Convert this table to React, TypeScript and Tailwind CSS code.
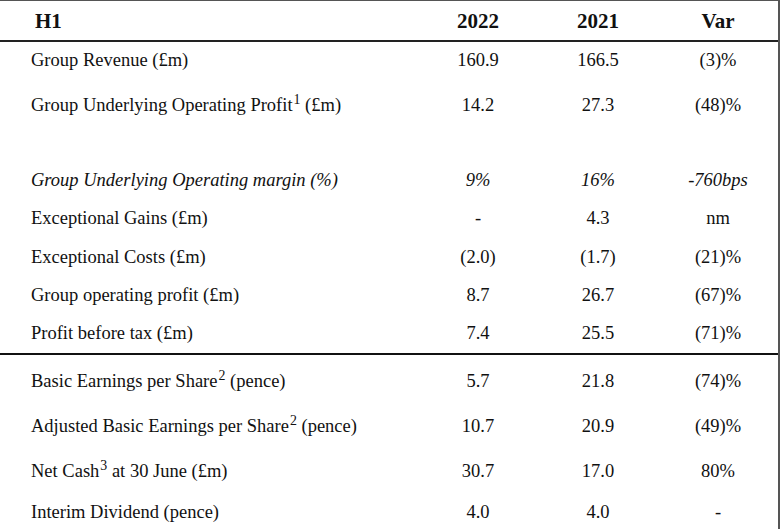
const rows = [
  { label: 'Group Revenue (£m)', a: '160.9', b: '166.5', v: '(3)%', h: 'h-[36px]' },
  { label: 'Group Underlying Operating Profit', sup: '1', after: ' (£m)', a: '14.2', b: '27.3', v: '(48)%', h: 'h-[54px]' },
  { spacer: true, h: 'h-[29px]' },
  { label: 'Group Underlying Operating margin (%)', a: '9%', b: '16%', v: '-760bps', h: 'h-[38px]', italic: true },
  { label: 'Exceptional Gains (£m)', a: '-', b: '4.3', v: 'nm', h: 'h-[38px]' },
  { label: 'Exceptional Costs (£m)', a: '(2.0)', b: '(1.7)', v: '(21)%', h: 'h-[40px]' },
  { label: 'Group operating profit (£m)', a: '8.7', b: '26.7', v: '(67)%', h: 'h-[36px]' },
  { label: 'Profit before tax (£m)', a: '7.4', b: '25.5', v: '(71)%', h: 'h-[42px]', rule: true },
  { label: 'Basic Earnings per Share', sup: '2', after: ' (pence)', a: '5.7', b: '21.8', v: '(74)%', h: 'h-[52px]' },
  { label: 'Adjusted Basic Earnings per Share', sup: '2', after: ' (pence)', a: '10.7', b: '20.9', v: '(49)%', h: 'h-[38px]' },
  { label: 'Net Cash', sup: '3', after: ' at 30 June (£m)', a: '30.7', b: '17.0', v: '80%', h: 'h-[52px]' },
  { label: 'Interim Dividend (pence)', a: '4.0', b: '4.0', v: '-', h: 'h-[22px]' },
]

export default function App() {
  return (
    <div className="min-h-screen w-[780px] border-r-2 border-[#555] bg-white font-['Liberation_Serif',serif] text-[#111]">
      {/* Header */}
      <div className="grid h-[42px] grid-cols-[418px_120px_120px_120px] items-center border-t border-b-2 border-t-[#555] border-b-[#222] text-[21px] font-bold">
        <div className="pl-[35px] pt-[2px]">H1</div>
        <div className="pt-[2px] text-center">2022</div>
        <div className="pt-[2px] text-center">2021</div>
        <div className="pt-[2px] text-center">Var</div>
      </div>

      {rows.map((r, i) =>
        r.spacer ? (
          <div key={i} className={r.h} />
        ) : (
          <div
            key={i}
            className={`grid grid-cols-[418px_120px_120px_120px] items-center pt-[2px] text-[18.5px] ${r.h} ${
              r.italic ? 'italic' : ''
            } ${r.rule ? 'border-b-2 border-[#111]' : ''}`}
          >
            <div className="pl-[31px]">
              {r.label}
              {r.sup && <sup className="ml-px">{r.sup}</sup>}
              {r.after}
            </div>
            <div className="text-center">{r.a}</div>
            <div className="text-center">{r.b}</div>
            <div className="text-center">{r.v}</div>
          </div>
        )
      )}
    </div>
  )
}
